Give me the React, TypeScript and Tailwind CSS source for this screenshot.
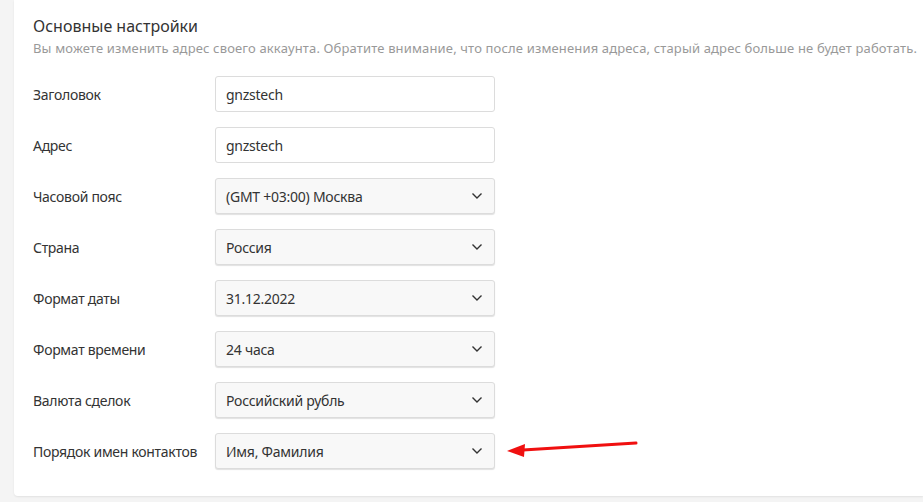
import React from "react";

const font = { fontFamily: '"Noto Sans", "Open Sans", sans-serif' };

type Field = { label: string; value: string; select?: boolean };

const fields: Field[] = [
  { label: "Заголовок", value: "gnzstech" },
  { label: "Адрес", value: "gnzstech" },
  { label: "Часовой пояс", value: "(GMT +03:00) Москва", select: true },
  { label: "Страна", value: "Россия", select: true },
  { label: "Формат даты", value: "31.12.2022", select: true },
  { label: "Формат времени", value: "24 часа", select: true },
  { label: "Валюта сделок", value: "Российский рубль", select: true },
  { label: "Порядок имен контактов", value: "Имя, Фамилия", select: true },
];

function Chevron() {
  return (
    <svg width="12" height="8" viewBox="0 0 12 8" className="text-[#333]">
      <path d="M1.5 1.5 L6 6 L10.5 1.5" fill="none" stroke="currentColor" strokeWidth="1.4" />
    </svg>
  );
}

function Control({ field }: { field: Field }) {
  if (field.select) {
    return (
      <div className="w-[280px] h-[36px] flex items-center justify-between pl-[10px] pr-[11px] rounded-[3px] border border-[#dcdcdc] bg-[#f8f8f8] shadow-[0_1px_1px_rgba(0,0,0,0.12)] text-[14px] tracking-[-0.25px] text-[#333]">
        <span>{field.value}</span>
        <Chevron />
      </div>
    );
  }
  return (
    <div className="w-[280px] h-[36px] flex items-center pl-[10px] rounded-[3px] border border-[#dcdcdc] bg-white text-[14px] tracking-[-0.25px] text-[#333]">
      {field.value}
    </div>
  );
}

export default function App() {
  return (
    <div className="w-[923px] h-[502px] bg-[#f4f4f4] overflow-hidden" style={font}>
      <div className="ml-[14px] h-[496px] bg-white rounded-bl-[4px] shadow-[0_1px_2px_rgba(0,0,0,0.08)] pl-[19px] pt-[14px]">
        <h2 className="text-[16px] leading-[24px] text-[#333]">Основные настройки</h2>
        <p className="text-[13px] leading-[20px] tracking-[0.15px] text-[#999] whitespace-nowrap">
          Вы можете изменить адрес своего аккаунта. Обратите внимание, что после изменения адреса, старый адрес больше не будет работать.
        </p>
        <div className="mt-[18px] flex flex-col gap-[15px]">
          {fields.map((f, i) => (
            <div key={i} className="flex items-center">
              <div className="w-[182px] text-[14px] tracking-[-0.3px] text-[#333]">{f.label}</div>
              <div className="relative">
                <Control field={f} />
                {i === fields.length - 1 && (
                  <svg
                    width="140"
                    height="24"
                    viewBox="0 0 140 24"
                    className="absolute left-[288px] top-[4px]"
                  >
                    <path d="M20 13 L133 6" stroke="#f01010" strokeWidth="3" strokeLinecap="round" fill="none" />
                    <path d="M4 14 L22 7 L21 20 Z" fill="#f01010" />
                  </svg>
                )}
              </div>
            </div>
          ))}
        </div>
      </div>
    </div>
  );
}
